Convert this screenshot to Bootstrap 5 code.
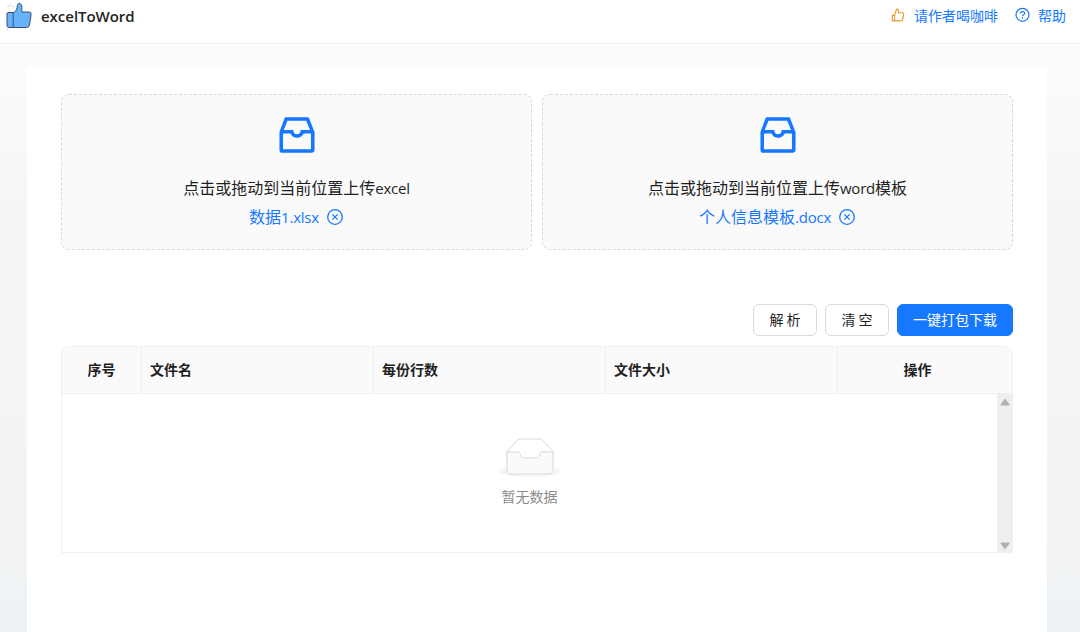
<!DOCTYPE html>
<html lang="zh-CN">
<head>
<meta charset="utf-8">
<meta name="viewport" content="width=device-width, initial-scale=1">
<title>excelToWord</title>
<link href="https://cdn.jsdelivr.net/npm/bootstrap@5.3.0/dist/css/bootstrap.min.css" rel="stylesheet">
<style>
  :root { --blue: #1677ff; --line: #f0f0f0; }
  body { font-family: "Noto Sans CJK SC", sans-serif; font-size: 14px; line-height: 22px; color: #1f1f1f; height: 632px; overflow: hidden; background: #fff; }
  svg { display: block; flex: none; }
  .lat { font-family: "Open Sans", sans-serif; font-size: 15px; letter-spacing: -.22px; }
  .topbar { height: 44px; padding: 0 14px 13px 5px; border-bottom: 1px solid var(--line); background: #fff; }
  .brand-name { font-family: "Open Sans", sans-serif; font-weight: 600; font-size: 15px; letter-spacing: -.03px; margin-left: 8px; padding-top: 2px; color: #242424; }
  .blue { color: var(--blue); text-decoration: none; }
  .backdrop { height: 588px; padding: 24px 33px 0 27px; background: linear-gradient(180deg, #fcfcfc 0, #f9f9f9 80px, #f5f5f5 180px, #f3f3f3 500px, #f0f3f5 540px, #eef2f5 588px); }
  .sheet { height: 564px; padding: 26px 34px 0; background: #fff; }
  .drop { height: 156px; border: 1px dashed #d9d9d9; border-radius: 8px; background: #fafafa; padding-top: 16px; font-size: 16px; line-height: 24px; }
  .drop-hint { margin-top: 16px; }
  .drop-file { margin-top: 4px; gap: 7px; }
  .actions { margin-top: 54px; gap: 8px; }
  .act { min-width: 64px; height: 32px; padding: 0 15px 2px; font-size: 14px; line-height: 28px; border-radius: 6px; border: 1px solid #d9d9d9; color: #1f1f1f; background: #fff; }
  .act-main { background: var(--blue); border-color: var(--blue); color: #fff; }
  .grid-box { margin-top: 10px; height: 207px; border: 1px solid var(--line); border-radius: 8px 8px 0 0; overflow: hidden; }
  .grid-head { height: 47px; background: #fafafa; border-bottom: 1px solid var(--line); font-weight: 700; }
  .grid-head > div { padding: 0 8px; line-height: 44px; border-right: 1px solid var(--line); flex: none; }
  .grid-head > div:last-child { border-right: 0; }
  .c-no { width: 80px; } .c-std { width: 232px; } .c-op { width: 175px; padding-right: 24px !important; }
  .grid-body { height: 158px; }
  .empty { padding-top: 44px; color: #8c8c8c; }
  .empty span { margin-top: 6px; }
  .track { width: 15px; background: #efefef; padding: 4px 0 2px; }
</style>
</head>
<body>
<svg width="0" height="0" class="position-absolute">
  <symbol id="inbox" viewBox="0 0 1024 1024"><path d="M885.2 446.3l-.2-.8-112.2-285.1c-5-16.1-19.9-27.2-36.8-27.2H281.2c-17 0-32.1 11.3-36.9 27.6L139.4 443l-.3.7-.2.8c-1.3 4.9-1.7 9.9-1 14.8-.1 1.6-.2 3.2-.2 4.8V830a60.9 60.9 0 0060.8 60.8h627.2c33.5 0 60.8-27.3 60.9-60.8V464.1c0-1.3 0-2.6-.1-3.7.4-4.9 0-9.6-1.3-14.1zm-295.8-43l-.3 15.7c-.8 44.9-31.8 75.1-77.1 75.1-22.1 0-41.1-7.1-54.8-20.6S436 441.2 435.6 419l-.3-15.7H229.5L309 210h399.2l81.7 193.3H589.4zm-375 76.8h157.3c24.3 57.1 76 90.8 140.4 90.8 33.7 0 65-9.4 90.3-27.2 22.2-15.6 39.5-37.4 50.7-63.6h156.5V814H214.4V480.1z"/></symbol>
  <symbol id="remove" viewBox="0 0 18 18"><g fill="none" stroke="currentColor" stroke-width="1.3"><circle cx="9" cy="9" r="7.3"/><path d="M6.400 6.400l5.200 5.200M11.600 6.400l-5.200 5.200"/></g></symbol>
</svg>

<header class="topbar d-flex align-items-center justify-content-between">
  <div class="d-flex align-items-center">
    <svg width="28" height="30" viewBox="0 0 28 30">
      <path d="M3 12.500Q2 12.500 2 14v11.500Q2 27.500 4 27.500h17.500q2.500 0 3-2.500l1.600-10.500q.3-2.500-2-2.500H17c-.7-2 .4-4-.4-6.700-.8-2.700-4-2.500-4.200 0-.2 3.700-1 5.500-3.700 7.200z" fill="#66b3fb" stroke="#3d4f70" stroke-width="1"/>
      <path d="M8.200 12.700v14.500" stroke="#31517b" stroke-width="1"/>
      <path d="M2.500 6.500h1M5 4.500v1M7.500 6.500h1M2 29.500h1" stroke="#aaaef5" stroke-width="1"/>
    </svg>
    <span class="brand-name">excelToWord</span>
  </div>
  <nav class="d-flex align-items-center">
    <a href="#" class="blue d-flex align-items-center">
      <svg class="me-2" width="16" height="16" viewBox="0 0 1024 1024" fill="#e89a2e"><path d="M885.9 533.7c16.800-22.200 26.100-49.400 26.100-77.700 0-44.900-25.100-87.400-65.500-111.100a67.670 67.670 0 00-34.300-9.300H572.400l6-122.900c1.400-29.700-9.100-57.900-29.500-79.400A106.620 106.620 0 00471 99.900c-52 0-98 35-111.800 85.100l-85.900 311H144c-17.700 0-32 14.300-32 32v364c0 17.700 14.300 32 32 32h601.300c9.200 0 18.200-1.800 26.500-5.400 47.600-20.300 78.300-66.800 78.300-118.400 0-12.600-1.800-25-5.400-37 16.800-22.200 26.100-49.400 26.100-77.700 0-12.600-1.800-25-5.400-37 16.800-22.200 26.100-49.400 26.100-77.700-.2-12.600-2-25.100-5.600-37.100zM184 852V568h81v284h-81zm636.400-353l-21.900 19 13.900 25.400a56.200 56.200 0 016.900 27.300c0 16.500-7.200 32.200-19.600 43l-21.900 19 13.900 25.400a56.200 56.200 0 016.900 27.300c0 16.500-7.200 32.200-19.600 43l-21.900 19 13.900 25.400a56.200 56.200 0 016.900 27.300c0 22.400-13.200 42.600-33.600 51.800H329V564.800l99.500-360.500a44.100 44.100 0 0142.200-32.300c7.600 0 15.100 2.200 21.100 6.700 9.900 7.400 15.200 18.600 14.600 30.500l-9.600 198.400h314.400C829 418.500 840 436.900 840 456c0 16.500-7.200 32.100-19.600 43z"/></svg>
      请作者喝咖啡
    </a>
    <a href="#" class="blue d-flex align-items-center ms-3">
      <svg class="me-2" width="16" height="16" viewBox="0 0 16 16" fill="none" stroke="currentColor" stroke-width="1.2"><circle cx="8.500" cy="7.800" r="6.500"/><path d="M6.400 6.500c0-2.600 4.200-2.600 4.200-.1 0 1.400-2.100 1.400-2.100 2.900"/><path d="M8.500 10.200v1.300"/></svg>
      帮助
    </a>
  </nav>
</header>

<main class="backdrop">
  <section class="sheet">
    <div class="row row-cols-2 m-0" style="--bs-gutter-x:10px">
      <div class="col ps-0">
        <div class="drop d-flex flex-column align-items-center">
          <svg class="blue" width="48" height="48" fill="currentColor"><use href="#inbox"/></svg>
          <div class="drop-hint">点击或拖动到当前位置上传<span class="lat">excel</span></div>
          <div class="drop-file blue d-flex align-items-center"><span>数据<span class="lat">1.xlsx</span></span><svg width="18" height="18"><use href="#remove"/></svg></div>
        </div>
      </div>
      <div class="col pe-0">
        <div class="drop d-flex flex-column align-items-center">
          <svg class="blue" width="48" height="48" fill="currentColor"><use href="#inbox"/></svg>
          <div class="drop-hint">点击或拖动到当前位置上传<span class="lat">word</span>模板</div>
          <div class="drop-file blue d-flex align-items-center"><span>个人信息模板<span class="lat">.docx</span></span><svg width="18" height="18"><use href="#remove"/></svg></div>
        </div>
      </div>
    </div>

    <div class="actions d-flex justify-content-end">
      <button type="button" class="btn act">解 析</button>
      <button type="button" class="btn act">清 空</button>
      <button type="button" class="btn act act-main">一键打包下载</button>
    </div>

    <div class="grid-box">
      <div class="grid-head d-flex">
        <div class="c-no text-center">序号</div>
        <div class="c-std">文件名</div>
        <div class="c-std">每份行数</div>
        <div class="c-std">文件大小</div>
        <div class="c-op text-center">操作</div>
      </div>
      <div class="grid-body d-flex">
        <div class="empty flex-grow-1 d-flex flex-column align-items-center">
          <svg width="64" height="41" viewBox="0 0 64 41"><g transform="translate(0 1)" fill="none"><ellipse fill="#f5f5f5" cx="32" cy="32" rx="31" ry="6"/><g stroke="#d9d9d9"><path fill="#fff" d="M55 12.760L44.854 1.258C44.367.474 43.656 0 42.907 0H21.093c-.749 0-1.460.474-1.947 1.257L9 12.761V22h46v-9.240z"/><path d="M41.613 15.931c0-1.605.994-2.930 2.227-2.931H55v18.137C55 33.260 53.680 35 52.050 35h-40.100C10.320 35 9 33.259 9 31.137V13h11.160c1.233 0 2.227 1.323 2.227 2.928v.022c0 1.605 1.005 2.901 2.237 2.901h14.752c1.232 0 2.237-1.308 2.237-2.913v-.007z" fill="#fafafa"/></g></g></svg>
          <span>暂无数据</span>
        </div>
        <div class="track d-flex flex-column align-items-center justify-content-between">
          <svg width="10" height="8" viewBox="0 0 10 8"><path d="M5 .5L9.500 6.500Q9.500 7.500 8.500 7.500h-7Q.5 7.500.5 6.500z" fill="#b0b0b0"/></svg>
          <svg width="10" height="8" viewBox="0 0 10 8"><path d="M5 7.500L9.500 1.500Q9.500.5 8.500.5h-7Q.5.5.5 1.500z" fill="#b0b0b0"/></svg>
        </div>
      </div>
    </div>
  </section>
</main>
<script src="https://cdn.jsdelivr.net/npm/bootstrap@5.3.0/dist/js/bootstrap.bundle.min.js"></script>
</body>
</html>
